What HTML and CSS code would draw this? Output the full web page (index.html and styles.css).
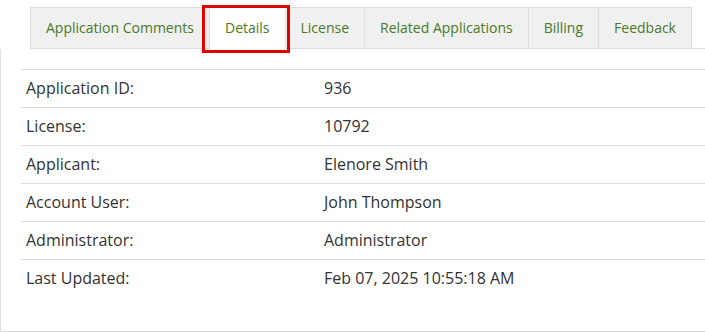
FILE: index.html
```
<!DOCTYPE html>
<html>
<head>
<meta charset="utf-8">
<link rel="stylesheet" href="styles.css">
</head>
<body>
<div class="page">
  <ul class="tabs">
    <li class="tab">Application Comments</li>
    <li class="tab active">Details</li>
    <li class="tab">License</li>
    <li class="tab">Related Applications</li>
    <li class="tab">Billing</li>
    <li class="tab">Feedback</li>
  </ul>
  <div class="highlight"></div>
  <div class="panel">
    <table class="details">
      <tr><td class="label">Application ID:</td><td class="value">936</td></tr>
      <tr><td class="label">License:</td><td class="value">10792</td></tr>
      <tr><td class="label">Applicant:</td><td class="value">Elenore Smith</td></tr>
      <tr><td class="label">Account User:</td><td class="value">John Thompson</td></tr>
      <tr><td class="label">Administrator:</td><td class="value">Administrator</td></tr>
      <tr><td class="label">Last Updated:</td><td class="value">Feb 07, 2025 10:55:18 AM</td></tr>
    </table>
  </div>
</div>
</body>
</html>
```
FILE: styles.css
```
html, body {
  margin: 0;
  padding: 0;
  background: #fff;
}
body {
  font-family: "Open Sans", "Liberation Sans", sans-serif;
  color: #333;
}
.page {
  position: relative;
  padding-top: 7px;
}
.tabs {
  list-style: none;
  margin: 0 0 0 30px;
  padding: 0;
  display: flex;
  border-bottom: 1px solid #ddd;
}
.tab {
  background: #f0f0f0;
  border: 1px solid #ddd;
  border-left: none;
  color: #4a7a25;
  font-size: 14px;
  line-height: 20px;
  padding: 10px 15px;
  margin-bottom: -1px;
}
.tab:first-child {
  border-left: 1px solid #ddd;
}
.tab.active {
  background: #fff;
  border-bottom-color: #fff;
}
.highlight {
  position: absolute;
  left: 202px;
  top: 5px;
  width: 82px;
  height: 42px;
  border: 3px solid #e00000;
}
.panel {
  border-left: 1px solid #ddd;
  border-bottom: 1px solid #ddd;
  padding: 20px 0 34px 20px;
}
.details {
  border-collapse: collapse;
  width: 100%;
  font-size: 16px;
}
.details td {
  border-top: 1px solid #ddd;
  padding: 8px 5px;
  line-height: 21px;
  vertical-align: top;
}
.details td.label {
  width: 288px;
}
```
